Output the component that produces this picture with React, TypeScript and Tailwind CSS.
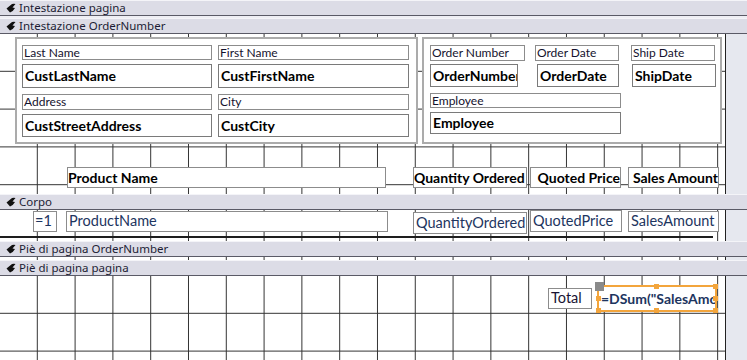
import type { ReactNode } from "react"

const GRID =
  "bg-[linear-gradient(to_left,#333_1px,transparent_1px),linear-gradient(to_top,#333_1px,transparent_1px)] bg-[length:37.8px_37.8px]"
const VGRID = "bg-[linear-gradient(to_left,#333_1px,transparent_1px)] bg-[length:37.8px_100%]"

function SectionIcon() {
  return (
    <svg width="10" height="10" viewBox="0 0 10 10" className="shrink-0">
      <path d="M0.5 5.5 L6 1 Q8 0.5 9.5 1 L6.5 4.5 L9 5 Q7.5 8 4 9.5 Z" fill="#111" />
    </svg>
  )
}

function Band({ label }: { label: string }) {
  return (
    <div className="flex h-[16px] items-center gap-[3px] border-t border-b border-t-[#f4f4f8] border-b-[#5a5a66] bg-[#dcdce6] pl-[6px] font-['Noto_Sans',sans-serif] text-[11.5px] leading-none text-[#1c1c34]">
      <SectionIcon />
      <span className="pb-px">{label}</span>
    </div>
  )
}

// label control: thin grey frame, small regular text
function Label({ w, h, children, className = "" }: { w: string; h: string; children: ReactNode; className?: string }) {
  return (
    <div
      className={`flex items-center overflow-hidden whitespace-nowrap border border-[#8c8c8c] bg-white pl-px text-[12px] leading-none text-[#14122e] ${w} ${h} ${className}`}
    >
      {children}
    </div>
  )
}

// bound text box in the group header: bold field name
function Field({ w, h, className = "", children }: { w: string; h: string; className?: string; children: ReactNode }) {
  return (
    <div
      className={`flex items-center overflow-hidden whitespace-nowrap border border-[#7a7a7a] bg-white pl-[2px] text-[14px] font-bold leading-none text-black ${w} ${h} ${className}`}
    >
      {children}
    </div>
  )
}

function Handle({ className }: { className: string }) {
  return <div className={`absolute h-[5px] w-[5px] bg-[#f3a53c] ${className}`} />
}

export default function App() {
  return (
    <div className="flex h-[360px] w-[747px] flex-col overflow-hidden bg-white font-['Lato',sans-serif]">
      <Band label="Intestazione pagina" />
      <div className="h-[2px] bg-[#eeeef4]" />
      <Band label="Intestazione OrderNumber" />

      {/* Intestazione OrderNumber section */}
      <div className="flex h-[160px]">
        <div className={`w-[726px] border-r border-[#222] ${GRID}`}>
          <div className="flex gap-[4px] pl-[15px] pt-[3px]">
            {/* customer block */}
            <div className="flex h-[107px] w-[403px] gap-[6px] border-2 border-[#ababab] bg-white px-[5px] pt-[6px]">
              <div className="flex flex-col">
                <Label w="w-[190px]" h="h-[15px]">Last Name</Label>
                <Field w="w-[190px]" h="h-[24px]" className="mt-[4px]">CustLastName</Field>
                <Label w="w-[190px]" h="h-[16px]" className="mt-[6px]">Address</Label>
                <Field w="w-[190px]" h="h-[23px]" className="mt-[4px]">CustStreetAddress</Field>
              </div>
              <div className="flex flex-col">
                <Label w="w-[191px]" h="h-[15px]">First Name</Label>
                <Field w="w-[191px]" h="h-[24px]" className="mt-[4px]">CustFirstName</Field>
                <Label w="w-[191px]" h="h-[16px]" className="mt-[6px]">City</Label>
                <Field w="w-[191px]" h="h-[23px]" className="mt-[4px]">CustCity</Field>
              </div>
            </div>

            {/* order block */}
            <div className="flex h-[107px] w-[300px] flex-col border-2 border-[#ababab] bg-white pl-[6px] pt-[6px]">
              <div className="flex">
                <Label w="w-[95px]" h="h-[16px]">Order Number</Label>
                <Label w="w-[84px]" h="h-[16px]" className="ml-[10px]">Order Date</Label>
                <Label w="w-[84px]" h="h-[16px]" className="ml-[12px]">Ship Date</Label>
              </div>
              <div className="mt-[3px] flex">
                <Field w="w-[88px]" h="h-[23px]">OrderNumber</Field>
                <Field w="w-[82px]" h="h-[23px]" className="ml-[19px]">OrderDate</Field>
                <Field w="w-[84px]" h="h-[23px]" className="ml-[13px]">ShipDate</Field>
              </div>
              <Label w="w-[191px]" h="h-[15px]" className="mt-[6px]">Employee</Label>
              <Field w="w-[191px]" h="h-[22px]" className="mt-[4px]">Employee</Field>
            </div>
          </div>

          {/* column headings */}
          <div className="mt-[23px] flex pl-[67px] text-[14px] font-bold leading-none text-black">
            <div className="flex h-[21px] w-[319px] items-center border border-[#8c8c8c] bg-white">Product Name</div>
            <div className="ml-[27px] flex h-[21px] w-[114px] items-center whitespace-nowrap border border-[#8c8c8c] bg-white">
              Quantity Ordered
            </div>
            <div className="ml-[3px] flex h-[21px] w-[91px] items-center justify-end whitespace-nowrap border border-[#8c8c8c] bg-white">
              Quoted Price
            </div>
            <div className="ml-[7px] flex h-[21px] w-[91px] items-center justify-end overflow-hidden whitespace-nowrap border border-[#8c8c8c] bg-white">
              Sales Amount
            </div>
          </div>
        </div>
        <div className="flex-1 bg-[#e6e8ef]" />
      </div>

      <Band label="Corpo" />

      {/* Corpo section */}
      <div className="flex h-[31px]">
        <div className={`flex w-[726px] flex-col border-r border-[#222] ${VGRID}`}>
          <div className="flex h-[24px] items-start text-[14.5px] leading-none text-[#1d3560]">
            <div className="ml-[33px] mt-px flex h-[21px] w-[24px] items-center border border-[#8c8c8c] bg-white pl-px">=1</div>
            <div className="ml-[9px] mt-px flex h-[21px] w-[322px] items-center border border-[#8c8c8c] bg-white pl-[2px]">
              ProductName
            </div>
            <div className="ml-[25px] mt-[2px] flex h-[22px] w-[114px] items-center border border-[#8c8c8c] bg-white pl-[2px]">
              QuantityOrdered
            </div>
            <div className="ml-[3px] flex h-[22px] w-[92px] items-center border border-[#8c8c8c] bg-white pl-[2px]">
              QuotedPrice
            </div>
            <div className="ml-[6px] mt-px flex h-[21px] w-[91px] items-center border border-[#8c8c8c] bg-white pl-[2px]">
              SalesAmount
            </div>
          </div>
          <div className="mt-[2px] h-[2px] w-[713px] bg-[#1e1e1e]" />
        </div>
        <div className="flex-1 bg-[#e6e8ef]" />
      </div>

      <Band label="Piè di pagina OrderNumber" />
      <div className="flex h-[3px]">
        <div className={`w-[726px] border-r border-[#222] ${VGRID}`} />
        <div className="flex-1 bg-[#e6e8ef]" />
      </div>
      <Band label="Piè di pagina pagina" />

      {/* Piè di pagina pagina section */}
      <div className="flex flex-1">
        <div className={`flex w-[726px] items-start border-r border-[#222] pl-[548px] ${GRID}`}>
          <div className="mt-[12px] flex h-[21px] w-[44px] items-center border border-[#8c8c8c] bg-white pl-[2px] text-[14.5px] leading-none text-[#1a1433]">
            Total
          </div>
          <div className="relative ml-[5px] mt-[9px] flex h-[27px] w-[120px] items-center whitespace-nowrap border-2 border-[#f3a53c] bg-white pl-[2px] text-[14px] font-bold leading-none text-[#1d3560]">
            <span className="overflow-hidden">=DSum("SalesAmount")</span>
            <div className="absolute -left-[4px] -top-[5px] h-[9px] w-[9px] bg-[#8a8a8a]" />
            <Handle className="-top-[3px] left-[55px]" />
            <Handle className="-right-[3px] -top-[3px]" />
            <Handle className="-right-[3px] top-[9px]" />
            <Handle className="-bottom-[3px] -right-[3px]" />
            <Handle className="-bottom-[3px] left-[55px]" />
            <Handle className="-bottom-[3px] -left-[3px]" />
            <Handle className="-left-[3px] top-[9px]" />
          </div>
        </div>
        <div className="flex-1 bg-[#e6e8ef]" />
      </div>
    </div>
  )
}
